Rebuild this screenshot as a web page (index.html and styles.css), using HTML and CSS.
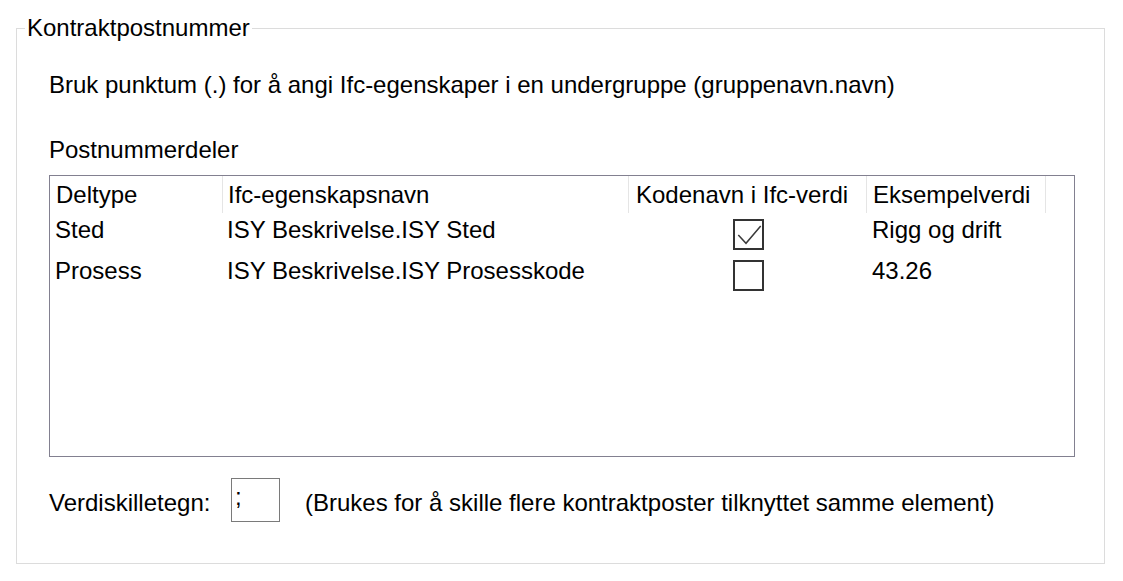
FILE: index.html
```html
<!DOCTYPE html>
<html lang="no">
<head>
<meta charset="utf-8">
<title>Kontraktpostnummer</title>
<link rel="stylesheet" href="styles.css">
</head>
<body>
<fieldset class="group">
  <legend class="group-title">Kontraktpostnummer</legend>
  <div class="group-body">
    <p class="hint">Bruk punktum (.) for å angi Ifc-egenskaper i en undergruppe (gruppenavn.navn)</p>
    <div class="section-label">Postnummerdeler</div>
    <div class="listview">
      <div class="lv-header">
        <div class="lv-hcell c1">Deltype</div>
        <div class="lv-hcell c2">Ifc-egenskapsnavn</div>
        <div class="lv-hcell c3">Kodenavn i Ifc-verdi</div>
        <div class="lv-hcell c4">Eksempelverdi</div>
      </div>
      <div class="lv-row">
        <div class="lv-cell c1">Sted</div>
        <div class="lv-cell c2">ISY Beskrivelse.ISY Sted</div>
        <div class="lv-cell c3 check-cell">
          <span class="checkbox">
            <svg viewBox="0 0 27 27" width="27" height="27"><polyline points="3.3,14 11,22.3 25.7,5" fill="none" stroke="#3a3a3a" stroke-width="1.5"/></svg>
          </span>
        </div>
        <div class="lv-cell c4">Rigg og drift</div>
      </div>
      <div class="lv-row">
        <div class="lv-cell c1">Prosess</div>
        <div class="lv-cell c2">ISY Beskrivelse.ISY Prosesskode</div>
        <div class="lv-cell c3 check-cell"><span class="checkbox"></span></div>
        <div class="lv-cell c4">43.26</div>
      </div>
    </div>
    <div class="sep-row">
      <span class="sep-label">Verdiskilletegn:</span>
      <span class="sep-input">;</span>
      <span class="sep-note">(Brukes for å skille flere kontraktposter tilknyttet samme element)</span>
    </div>
  </div>
</fieldset>
</body>
</html>
```
FILE: styles.css
```css
html, body {
  margin: 0;
  padding: 0;
  background: #ffffff;
}
body {
  font-family: "Liberation Sans", Arial, sans-serif;
  font-size: 24px;
  color: #000;
  padding: 16px 0 0 16px;
}
.group {
  margin: 0;
  padding: 0;
  border: 1px solid #dcdcdc;
  width: 1089px;
  height: 548px;
  box-sizing: border-box;
}
.group-title {
  margin-left: 8px;
  padding: 0 2px;
  line-height: 24px;
}
.group-body {
  padding-left: 32px;
}
.hint {
  margin: 31px 0 0 0;
  line-height: 28px;
}
.section-label {
  margin-top: 37px;
  line-height: 28px;
}
.listview {
  margin-top: 11px;
  width: 1026px;
  height: 282px;
  border: 1px solid #828090;
  box-sizing: border-box;
}
.lv-header, .lv-row {
  display: grid;
  grid-template-columns: 173px 406px 238px 179px;
}
.lv-header {
  height: 38px;
}
.lv-hcell {
  padding: 5px 0 0 6px;
  border-right: 1px solid #e5e5e5;
  height: 37px;
  box-sizing: border-box;
  line-height: 28px;
  white-space: nowrap;
}
.lv-hcell.c2 { padding-left: 5px; }
.lv-hcell.c3 { padding-left: 7px; }
.lv-hcell.c4 { padding-left: 6px; }
.lv-row {
  height: 41px;
}
.lv-cell {
  padding: 2px 0 0 5px;
  line-height: 28px;
  white-space: nowrap;
}
.lv-cell.c2 { padding-left: 4px; }
.lv-cell.c4 { padding-left: 5px; }
.check-cell {
  display: flex;
  justify-content: center;
  padding: 5px 0 0 0;
}
.checkbox {
  width: 31px;
  height: 31px;
  border: 2px solid #333333;
  box-sizing: border-box;
  display: flex;
  align-items: center;
  justify-content: center;
}
.checkbox svg { display: block; }
.sep-row {
  margin-top: 21px;
  display: flex;
  align-items: flex-start;
}
.sep-label {
  width: 182px;
  margin-top: 11px;
  line-height: 28px;
  white-space: nowrap;
}
.sep-input {
  width: 49px;
  height: 44px;
  border: 1px solid #7a7a7a;
  box-sizing: border-box;
  padding: 4px 0 0 3px;
  line-height: 28px;
}
.sep-note {
  margin-left: 25px;
  margin-top: 11px;
  line-height: 28px;
  white-space: nowrap;
}
```
